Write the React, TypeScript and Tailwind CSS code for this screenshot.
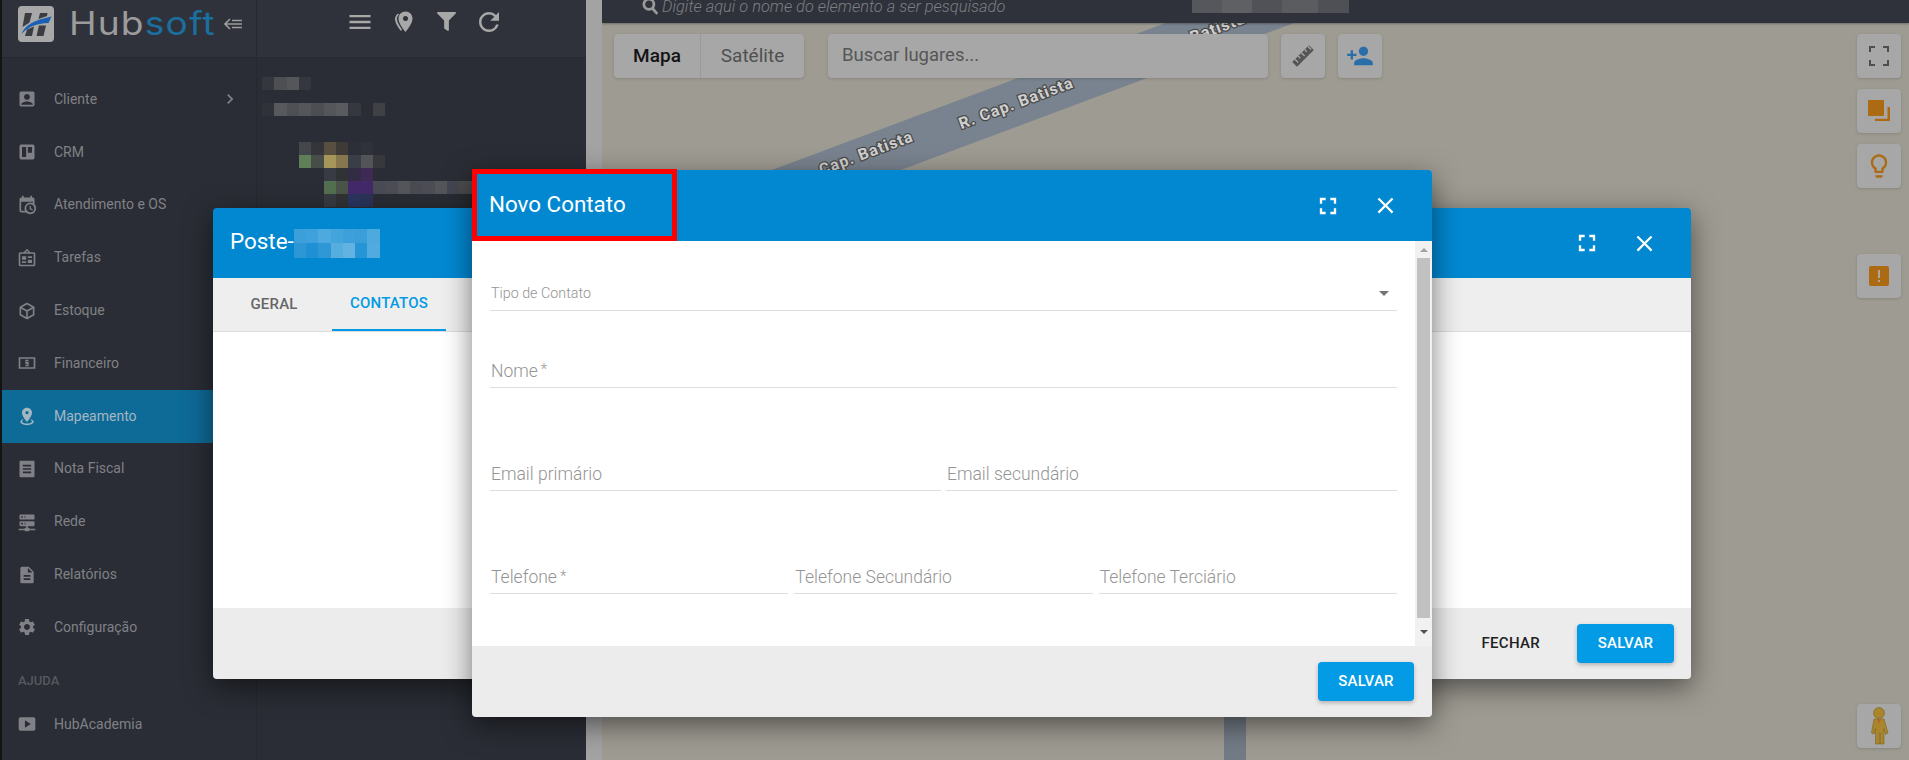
import {
  MdAccountBox,
  MdChevronRight,
  MdClose,
  MdDescription,
  MdFullscreen,
  MdLightbulbOutline,
  MdMenu,
  MdPersonAdd,
  MdRefresh,
  MdSettings,
  MdSmartDisplay,
} from "react-icons/md";
import { FaFilter } from "react-icons/fa";

type IconProps = { className?: string };

const MdiIcon = ({ d, className }: { d: string; className?: string }) => (
  <svg viewBox="0 0 24 24" fill="currentColor" className={className}>
    <path d={d} />
  </svg>
);

const CrmIcon = ({ className }: IconProps) => (
  <MdiIcon
    className={className}
    d="M5 3h14a2 2 0 0 1 2 2v14a2 2 0 0 1-2 2H5a2 2 0 0 1-2-2V5a2 2 0 0 1 2-2m1 3v12h5V6H6m7 0v7h5V6h-5Z"
  />
);

const CalendarClockIcon = ({ className }: IconProps) => (
  <MdiIcon
    className={className}
    d="M15,13H16.5V15.82L18.94,17.23L18.19,18.53L15,16.69V13M19,8H5V19H9.67C9.24,18.09 9,17.07 9,16A7,7 0 0,1 16,9C17.07,9 18.09,9.24 19,9.67V8M5,21C3.89,21 3,20.1 3,19V5C3,3.89 3.89,3 5,3H6V1H8V3H16V1H18V3H19A2,2 0 0,1 21,5V11.1C22.24,12.36 23,14.09 23,16A7,7 0 0,1 16,23C14.09,23 12.36,22.24 11.1,21H5M16,11.15A4.85,4.85 0 0,0 11.15,16C11.15,18.68 13.32,20.85 16,20.85A4.85,4.85 0 0,0 20.85,16C20.85,13.32 18.68,11.15 16,11.15Z"
  />
);

const TasksIcon = ({ className }: IconProps) => (
  <MdiIcon
    className={className}
    d="M12 1l4 4h4a2 2 0 0 1 2 2v13a2 2 0 0 1-2 2H4a2 2 0 0 1-2-2V7a2 2 0 0 1 2-2h4l4-4Zm0 2.4L10.4 5h3.2L12 3.4ZM4 7v13h16V7H4Zm2 3h5v4H6v-4Zm7 0h5v2h-5v-2Zm0 4h5v4h-5v-4Zm-7 2h5v2H6v-2Z"
  />
);

const CubeIcon = ({ className }: IconProps) => (
  <MdiIcon
    className={className}
    d="M21,16.5C21,16.88 20.79,17.21 20.47,17.38L12.57,21.82C12.41,21.94 12.21,22 12,22C11.79,22 11.59,21.94 11.43,21.82L3.53,17.38C3.21,17.21 3,16.88 3,16.5V7.5C3,7.12 3.21,6.79 3.53,6.62L11.43,2.18C11.59,2.06 11.79,2 12,2C12.21,2 12.41,2.06 12.57,2.18L20.47,6.62C20.79,6.79 21,7.12 21,7.5V16.5M12,4.15L6.04,7.5L12,10.85L17.96,7.5L12,4.15M5,15.91L11,19.29V12.58L5,9.21V15.91M19,15.91V9.21L13,12.58V19.29L19,15.91Z"
  />
);

const MoneyIcon = ({ className }: IconProps) => (
  <MdiIcon
    className={className}
    d="M2 5h20v14H2V5Zm2 2v10h16V7H4Zm10 1v1.6h-2.6v.9H14V16h-4v-1.6h2.6v-.9H10V8h4Z"
  />
);

const PinRadiusIcon = ({ className }: IconProps) => (
  <MdiIcon
    className={className}
    d="M12,2C15.31,2 18,4.66 18,7.95C18,12.41 12,19 12,19C12,19 6,12.41 6,7.95C6,4.66 8.69,2 12,2M12,6A2,2 0 0,0 10,8A2,2 0 0,0 12,10A2,2 0 0,0 14,8A2,2 0 0,0 12,6M20,19C20,21.21 16.42,23 12,23C7.58,23 4,21.21 4,19C4,17.71 5.22,16.56 7.11,15.83L7.75,16.74C6.67,17.19 6,17.81 6,18.5C6,19.88 8.69,21 12,21C15.31,21 18,19.88 18,18.5C18,17.81 17.33,17.19 16.25,16.74L16.89,15.83C18.78,16.56 20,17.71 20,19Z"
  />
);

const ReceiptIcon = ({ className }: IconProps) => (
  <MdiIcon
    className={className}
    d="M4 2h16a1 1 0 0 1 1 1v18a1 1 0 0 1-1 1H4a1 1 0 0 1-1-1V3a1 1 0 0 1 1-1Zm3 5v2h10V7H7Zm0 4v2h10v-2H7Zm0 4v2h10v-2H7Z"
  />
);

const ServerIcon = ({ className }: IconProps) => (
  <MdiIcon
    className={className}
    d="M13,19H14A1,1 0 0,1 15,20H22V22H15A1,1 0 0,1 14,23H10A1,1 0 0,1 9,22H2V20H9A1,1 0 0,1 10,19H11V17H4A1,1 0 0,1 3,16V12A1,1 0 0,1 4,11H20A1,1 0 0,1 21,12V16A1,1 0 0,1 20,17H13V19M4,3H20A1,1 0 0,1 21,4V8A1,1 0 0,1 20,9H4A1,1 0 0,1 3,8V4A1,1 0 0,1 4,3M9,7H10V5H9V7M9,15H10V13H9V15M5,5V7H7V5H5M5,13V15H7V13H5Z"
  />
);

const navItems = [
  { label: "Cliente", icon: MdAccountBox, chevron: true },
  { label: "CRM", icon: CrmIcon },
  { label: "Atendimento e OS", icon: CalendarClockIcon },
  { label: "Tarefas", icon: TasksIcon },
  { label: "Estoque", icon: CubeIcon },
  { label: "Financeiro", icon: MoneyIcon },
  { label: "Mapeamento", icon: PinRadiusIcon, active: true },
  { label: "Nota Fiscal", icon: ReceiptIcon },
  { label: "Rede", icon: ServerIcon },
  { label: "Relatórios", icon: MdDescription },
  { label: "Configuração", icon: MdSettings },
];

const NavRow = ({
  label,
  icon: Icon,
  chevron,
  active,
}: {
  label: string;
  icon: React.ComponentType<{ className?: string }>;
  chevron?: boolean;
  active?: boolean;
}) => (
  <div
    className={`flex items-center h-[52.8px] pl-[13px] pr-[16px] gap-[15px] text-[14px] ${
      active ? "bg-[#0e6a97] text-[#a3b7c3]" : "text-[#808186]"
    }`}
  >
    <span className="w-[24px] flex justify-center">
      <Icon className="w-[20px] h-[20px]" />
    </span>
    <span>{label}</span>
    {chevron && <MdChevronRight className="ml-auto w-[20px] h-[20px]" />}
  </div>
);

const Logo = () => (
  <div className="flex items-center pl-[16px] h-[47px]">
    <svg viewBox="0 0 36 36" className="w-[36px] h-[36px] shrink-0">
      <rect width="36" height="36" rx="4" fill="#a8a8a8" />
      <path d="M7 7h7l-2.500 9.500L4.500 21Z" fill="#3a3c41" />
      <path d="M22 7h7.500L29 10l-8.500 3Z" fill="#3a3c41" />
      <path d="M9 23.500 16 20.500 14 30H7Z" fill="#3a3c41" />
      <path d="M21 19.500h7L25.500 30h-7Z" fill="#3a3c41" />
      <path d="M3.500 28C7 19 16 14 33.500 10.500 32 14 31 16 30.500 17 18 17.500 10 21 3.500 28Z" fill="#1a5fb4" />
    </svg>
    <span className="ml-[15px] w-[143px] shrink-0 origin-left scale-x-[1.16] font-['Inter'] font-normal text-[32px] leading-none tracking-[1px] text-[#9c9c9c] whitespace-nowrap">
      Hub<span className="text-[#1a6f9e]">soft</span>
    </span>
    <svg viewBox="0 0 18 12" className="w-[18px] h-[12px] ml-auto mr-[14px] text-[#9c9c9c] shrink-0" fill="none" stroke="currentColor" strokeWidth="1.6">
      <path d="M6 1 1 6l5 5M1 6h17M8 2.5h10M8 9.5h10" />
    </svg>
  </div>
);

type Cell = string | null;

const MosaicRow = ({ cells, className }: { cells: Cell[]; className?: string }) => (
  <div className={`flex h-[13px] ${className ?? ""}`}>
    {cells.map((cell, i) => (
      <div key={i} className={`w-[12.33px] h-full ${cell ?? ""}`} />
    ))}
  </div>
);

const TreePanel = () => (
  <div className="w-[330px] bg-[#2a2d35] flex flex-col overflow-hidden border-l border-[#26282f]">
    <div className="h-[58px] bg-[#2f323a] border-b border-[#282a31] flex items-center pb-[14px] pl-[81px] text-[#a8a8a8] shrink-0">
      <span className="w-[43px] flex justify-center">
        <MdMenu className="w-[28px] h-[28px]" />
      </span>
      <span className="w-[45px] flex justify-center">
        <svg viewBox="0 0 24 24" className="w-[24px] h-[24px]" fill="currentColor">
          <path d="M13.5 1.5c4 0 7 3 7 7 0 4.500-4 9.800-7 13.500-3-3.700-7-9-7-13.500 0-4 3-7 7-7Zm0 4.500a2.500 2.500 0 1 0 0 5 2.500 2.500 0 0 0 0-5Z" />
          <path d="M6 3.500C4 5 3 6.800 3 9c0 3.500 3 8.500 6 12l1-1.500C7.500 16 5 12 5 9c0-1.800.6-3.300 2-4.500Z" />
        </svg>
      </span>
      <span className="w-[41px] flex justify-center">
        <FaFilter className="w-[19px] h-[19px]" />
      </span>
      <span className="w-[43px] flex justify-center">
        <MdRefresh className="w-[30px] h-[30px]" />
      </span>
    </div>
    <div className="pl-[5px] pt-[19px] flex flex-col">
      <MosaicRow cells={["bg-[#34373d]", "bg-[#4e4f53]", "bg-[#55565a]", "bg-[#34373e]"]} />
      <MosaicRow
        className="mt-[13px]"
        cells={[
          "bg-[#2f3239]",
          "bg-[#58595d]",
          "bg-[#4f5054]",
          "bg-[#55565a]",
          "bg-[#4d4e52]",
          "bg-[#55565a]",
          "bg-[#5a5b5e]",
          "bg-[#36383f]",
          null,
          "bg-[#404144]",
        ]}
      />
      <MosaicRow
        className="mt-[26px]"
        cells={[null, null, null, "bg-[#43464b]", "bg-[#33353a]", "bg-[#574f3f]", "bg-[#3e3a35]", "bg-[#2c2f37]", "bg-[#30323a]"]}
      />
      <MosaicRow
        cells={[
          null,
          null,
          null,
          "bg-[#5e7f58]",
          "bg-[#474d47]",
          "bg-[#a6965a]",
          "bg-[#86774f]",
          "bg-[#3a3e47]",
          "bg-[#525458]",
          "bg-[#37383c]",
        ]}
      />
      <MosaicRow cells={[null, null, null, null, null, "bg-[#383b43]", "bg-[#303235]", "bg-[#322d45]", "bg-[#3f2a55]"]} />
      <MosaicRow
        cells={[
          null,
          null,
          null,
          null,
          null,
          "bg-[#546f50]",
          "bg-[#4a5449]",
          "bg-[#44296a]",
          "bg-[#44296a]",
          "bg-[#4a4c55]",
          "bg-[#4d4e55]",
          "bg-[#55565b]",
          "bg-[#4a4c53]",
          "bg-[#4d4e55]",
          "bg-[#55565b]",
          "bg-[#454852]",
          "bg-[#4d4c4f]",
        ]}
      />
      <MosaicRow cells={[null, null, null, null, null, "bg-[#393b42]", "bg-[#303235]", "bg-[#2b3560]", "bg-[#2b3458]"]} />
    </div>
  </div>
);

const MapControl = ({ children, className }: { children: React.ReactNode; className?: string }) => (
  <div className={`h-[44px] w-[44px] rounded-[4px] bg-[#a7a7a7] flex items-center justify-center shadow-[0_1px_3px_rgba(0,0,0,0.15)] ${className ?? ""}`}>
    {children}
  </div>
);

const MapArea = () => (
  <div className="flex-1 flex flex-col relative overflow-hidden">
    <div className="h-[23px] bg-[#2f323a] shrink-0 flex items-start pl-[39px] relative z-10 overflow-hidden shadow-[0_1px_2px_rgba(0,0,0,0.3)]">
      <svg viewBox="0 0 16 16" className="w-[18px] h-[18px] -mt-[3px] text-[#9a9a9a]" fill="none" stroke="currentColor" strokeWidth="2.4">
        <circle cx="7" cy="6.500" r="4.500" />
        <path d="m10 10 4.500 5" />
      </svg>
      <span className="ml-[3px] mt-0 text-[16.400px] leading-[14px] italic font-light text-[#7c7e83] whitespace-nowrap">
        Digite aqui o nome do elemento a ser pesquisado
      </span>
      <div className="ml-[187px] h-[13px] flex">
        <div className="w-[30px] bg-[#56575c]" />
        <div className="w-[30px] bg-[#5f6064]" />
        <div className="w-[30px] bg-[#515257]" />
        <div className="w-[36px] bg-[#5b5c60]" />
        <div className="w-[31px] bg-[#4e5055]" />
      </div>
    </div>
    <div className="flex-1 bg-[#9e9b92] relative">
      <svg viewBox="602 23 1307 737" className="absolute inset-0 w-full h-full">
        <path d="M1310-7 700 221" stroke="#79838f" strokeWidth="45" fill="none" />
        <rect x="1224" y="700" width="22" height="60" fill="#737b85" />
        <g fontFamily="Roboto" fontWeight="700" fontSize="16" letterSpacing="1" fill="#cfcfcf" stroke="#4a4a4a" strokeWidth="2.5" paintOrder="stroke" textAnchor="middle">
          <text transform="translate(1018 108) rotate(-20.500)">R. Cap. Batista</text>
          <text transform="translate(868 158) rotate(-20.500)">Cap. Batista</text>
          <text transform="translate(1200 40) rotate(-20.500)">Cap. Batista</text>
        </g>
      </svg>
      <div className="absolute left-[12px] top-[11px] flex">
        <div className="h-[44px] w-[190px] flex rounded-[4px] bg-[#a7a7a7] shadow-[0_1px_3px_rgba(0,0,0,0.15)] text-[19px]">
          <div className="w-[87px] flex items-center justify-center font-medium text-[#141414] border-r border-[#9a9a9a]">Mapa</div>
          <div className="flex-1 flex items-center justify-center text-[#505050]">Satélite</div>
        </div>
        <div className="ml-[24px] h-[44px] w-[440px] rounded-[4px] bg-[#a7a7a7] flex items-center pl-[14px] text-[18.500px] text-[#565656] shadow-[0_1px_3px_rgba(0,0,0,0.15)]">
          Buscar lugares...
        </div>
        <MapControl className="ml-[13px]">
          <svg viewBox="0 0 24 24" className="w-[26px] h-[26px]">
            <path d="M2 17.500 17.500 2l4.500 4.500L6.500 22Z" fill="#555555" />
            <path d="m4.500 15 3 3M7.500 12l2 2M10.500 9l3 3M13.500 6l2 2M16.500 3l3 3" stroke="#a7a7a7" strokeWidth="1.200" fill="none" />
          </svg>
        </MapControl>
        <MapControl className="ml-[13px]">
          <MdPersonAdd className="w-[28px] h-[28px] text-[#2a6ea8]" />
        </MapControl>
      </div>
      <div className="absolute right-[8px] top-[11px] flex flex-col">
        <MapControl>
          <svg viewBox="0 0 24 24" className="w-[24px] h-[24px] text-[#4d4d4d]" fill="none" stroke="currentColor" strokeWidth="2">
            <path d="M3 8V3h5M16 3h5v5M21 16v5h-5M8 21H3v-5" />
          </svg>
        </MapControl>
        <MapControl className="mt-[11px]">
          <svg viewBox="0 0 24 24" className="w-[24px] h-[24px] text-[#ac6a12]" fill="currentColor">
            <rect x="1" y="1" width="16" height="16" rx="1" />
            <path d="M20.500 8H23v14H8v-2.200h12.500Z" />
          </svg>
        </MapControl>
        <MapControl className="mt-[11px]">
          <MdLightbulbOutline className="w-[28px] h-[28px] text-[#ac6a12]" />
        </MapControl>
        <MapControl className="mt-[66px]">
          <svg viewBox="0 0 20 20" className="w-[20px] h-[20px] text-[#ac6a12]" fill="currentColor">
            <path fillRule="evenodd" d="M2 0h16a2 2 0 0 1 2 2v16a2 2 0 0 1-2 2H2a2 2 0 0 1-2-2V2a2 2 0 0 1 2-2Zm7 4v8h2V4H9Zm0 10v2h2v-2H9Z" />
          </svg>
        </MapControl>
      </div>
      <MapControl className="absolute right-[8px] bottom-[12px] bg-[#9a9a96]">
        <svg viewBox="0 0 20 38" className="w-[20px] h-[38px]">
          <circle cx="10" cy="6" r="5.500" fill="#a9852c" stroke="#7c6420" strokeWidth="0.6" />
          <path d="M5 12h10l4 14-2.500 1.500-1.500-6V37h-3.600V26h-.8v11H6.500V21.500L5 27 2.500 26 5 12Z" fill="#a9852c" stroke="#7c6420" strokeWidth="0.6" />
          <path d="M8 12h4l-2 5Z" fill="#b8632a" />
        </svg>
      </MapControl>
    </div>
  </div>
);

const DialogIcons = () => (
  <div className="ml-auto flex items-center text-white">
    <MdFullscreen className="w-[28px] h-[28px]" />
    <MdClose className="ml-[30px] w-[27px] h-[27px]" />
  </div>
);

const SaveButton = ({ className }: { className?: string }) => (
  <button className={`h-[39px] rounded-[4px] bg-[#039be5] text-white text-[15px] font-medium tracking-[0.2px] shadow-[0_2px_4px_rgba(0,0,0,0.25)] ${className ?? ""}`}>
    SALVAR
  </button>
);

const PosteDialog = () => (
  <div className="absolute left-[213px] top-[208px] w-[1478px] h-[471px] flex flex-col rounded-[4px] overflow-hidden shadow-[0_8px_28px_rgba(0,0,0,0.5)]">
    <div className="h-[70px] bg-[#0288d1] flex items-center pl-[17px] pr-[33px] shrink-0">
      <span className="text-[22.400px] text-white pb-[2px]">Poste-</span>
      <div className="w-[86px] h-[29px] grid grid-cols-[repeat(7,1fr)] grid-rows-2">
        <div className="bg-[#3b9fd9]" />
        <div className="bg-[#3fa1dc]" />
        <div className="bg-[#4ea9de]" />
        <div className="bg-[#44a4dc]" />
        <div className="bg-[#3da0da]" />
        <div className="bg-[#3a9ed9]" />
        <div className="bg-[#4ea9de]" />
        <div className="bg-[#2d97d6]" />
        <div className="bg-[#1f90d3]" />
        <div className="bg-[#2e98d6]" />
        <div className="bg-[#56addf]" />
        <div className="bg-[#62b3e2]" />
        <div className="bg-[#2595d5]" />
        <div className="bg-[#52abdf]" />
      </div>
      <DialogIcons />
    </div>
    <div className="h-[54px] bg-[#eeeeee] border-b border-[#dcdcdc] flex pl-[3px] text-[15px] font-medium tracking-[0.2px] shrink-0">
      <div className="w-[116px] flex items-center justify-center text-[#666666]">GERAL</div>
      <div className="w-[114px] flex items-center justify-center text-[#039be5] border-b-2 border-[#039be5]">CONTATOS</div>
    </div>
    <div className="flex-1 bg-white" />
    <div className="h-[71px] bg-[#ececec] flex items-center justify-end pr-[17px] shrink-0">
      <span className="mr-[37px] text-[15px] font-medium tracking-[0.3px] text-[#222222]">FECHAR</span>
      <SaveButton className="w-[97px]" />
    </div>
  </div>
);

const Field = ({ label, required, small, className }: { label: string; required?: boolean; small?: boolean; className?: string }) => (
  <div className={`h-[33px] flex items-center border-b border-[#dedede] pl-[1px] font-light text-[#949494] ${small ? "text-[14.300px]" : "text-[17.500px]"} ${className ?? ""}`}>
    <span>{label}</span>
    {required && <span className="ml-[3px] text-[15px] -mt-[3px]">*</span>}
  </div>
);

const NovoContatoDialog = () => (
  <div className="absolute left-[472px] top-[170px] w-[960px] h-[547px] flex flex-col rounded-[4px] shadow-[0_8px_28px_rgba(0,0,0,0.5)] font-['Roboto']">
    <div className="relative h-[71px] bg-[#0288d1] rounded-t-[4px] flex items-center pl-[17px] pr-[33px] shrink-0">
      <span className="text-[22.400px] text-white pb-[2px]">Novo Contato</span>
      <div className="absolute left-0 -top-[1px] w-[205px] h-[72px] border-[5px] border-[#ff0000]" />
      <DialogIcons />
    </div>
    <div className="flex-1 bg-white flex min-h-0">
      <div className="flex-1 pt-[37px] px-[18px] flex flex-col">
        <div className="relative">
          <Field label="Tipo de Contato" small />
          <div className="absolute right-[8px] top-[13px] w-0 h-0 border-x-[5px] border-x-transparent border-t-[5px] border-t-[#757575]" />
        </div>
        <Field label="Nome" required className="mt-[44px]" />
        <div className="mt-[70px] flex gap-[5px]">
          <Field label="Email primário" className="flex-1" />
          <Field label="Email secundário" className="flex-1" />
        </div>
        <div className="mt-[70px] flex gap-[6px]">
          <Field label="Telefone" required className="flex-1 pt-[1px]" />
          <Field label="Telefone Secundário" className="flex-1 pt-[1px]" />
          <Field label="Telefone Terciário" className="flex-1 pt-[1px]" />
        </div>
      </div>
      <div className="w-[17px] bg-[#f1f1f1] flex flex-col items-center shrink-0">
        <div className="h-[17px] flex items-center justify-center">
          <div className="w-0 h-0 border-x-[4px] border-x-transparent border-b-[4px] border-b-[#a3a3a3]" />
        </div>
        <div className="w-[13px] h-[360px] bg-[#c1c1c1]" />
        <div className="flex-1 flex items-center justify-center">
          <div className="w-0 h-0 border-x-[4px] border-x-transparent border-t-[4px] border-t-[#505050]" />
        </div>
      </div>
    </div>
    <div className="h-[71px] bg-[#ececec] rounded-b-[4px] flex items-center justify-end pr-[18px] shrink-0">
      <SaveButton className="w-[96px]" />
    </div>
  </div>
);

export default function App() {
  return (
    <div className="relative w-full h-screen overflow-hidden flex bg-[#2a2d35] font-['Roboto',sans-serif]">
      <div className="w-[2px] bg-[#141414] shrink-0" />
      <aside className="w-[254px] bg-[#2a2d35] flex flex-col shrink-0">
        <div className="h-[58px] bg-[#2f323a] border-b border-[#26282f] shrink-0">
          <Logo />
        </div>
        <nav className="pt-[15px] flex flex-col">
          {navItems.map((item) => (
            <NavRow key={item.label} {...item} />
          ))}
          <div className="h-[44px] pt-[10px] pl-[16px] flex items-center text-[13px] font-medium text-[#56585e]">AJUDA</div>
          <NavRow label="HubAcademia" icon={MdSmartDisplay} />
        </nav>
      </aside>
      <TreePanel />
      <div className="w-[16px] bg-[#a3a3a3] shrink-0" />
      <MapArea />
      <PosteDialog />
      <NovoContatoDialog />
    </div>
  );
}
